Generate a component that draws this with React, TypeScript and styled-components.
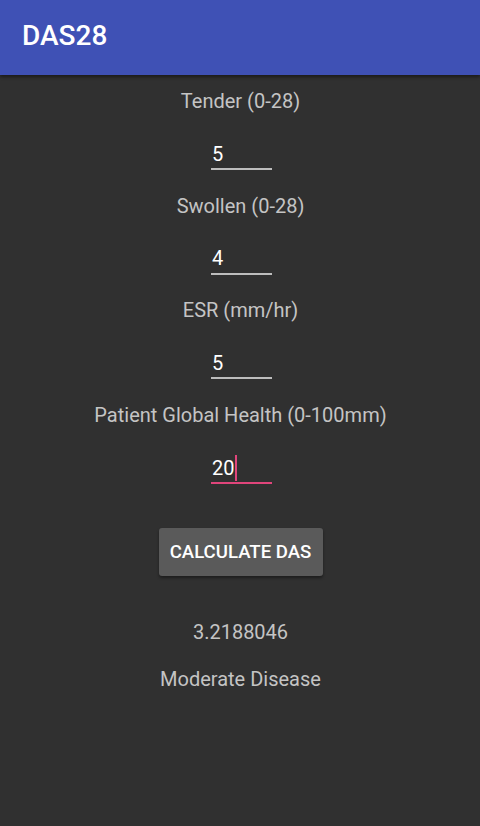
import styled, { createGlobalStyle } from 'styled-components';

const GlobalStyle = createGlobalStyle`
  html, body {
    margin: 0;
    padding: 0;
    background: #303030;
    font-family: Roboto, 'Noto Sans', sans-serif;
  }
  * {
    box-sizing: border-box;
  }
`;

const fields = [
  { label: 'Tender (0-28)', value: '5' },
  { label: 'Swollen (0-28)', value: '4' },
  { label: 'ESR (mm/hr)', value: '5' },
  { label: 'Patient Global Health (0-100mm)', value: '20', focused: true },
];

export default function App() {
  return (
    <Screen>
      <GlobalStyle />
      <Toolbar>
        <Title>DAS28</Title>
      </Toolbar>
      <Content>
        {fields.map(field => (
          <Field key={field.label}>
            <Label>{field.label}</Label>
            <Input $focused={field.focused}>
              {field.value}
              {field.focused ? <Cursor /> : null}
            </Input>
          </Field>
        ))}
        <Button>CALCULATE DAS</Button>
        <Result>3.2188046</Result>
        <Verdict>Moderate Disease</Verdict>
      </Content>
    </Screen>
  );
}

const Screen = styled.div`
  width: 480px;
  min-height: 826px;
  background: #303030;
  display: flex;
  flex-direction: column;
`;

const Toolbar = styled.div`
  height: 75px;
  background: #3f51b5;
  display: flex;
  align-items: center;
  padding-left: 22px;
  box-shadow: 0 2px 3px rgba(0, 0, 0, 0.45);
  position: relative;
  z-index: 1;
`;

const Title = styled.div`
  color: #ffffff;
  font-size: 28px;
  font-weight: 500;
  margin-top: -4px;
`;

const Content = styled.div`
  display: flex;
  flex-direction: column;
  align-items: center;
  padding-top: 12px;
  padding-left: 1px;
`;

const Field = styled.div`
  display: flex;
  flex-direction: column;
  align-items: center;
  margin-bottom: 21.7px;
`;

const Label = styled.div`
  color: #c4c4c4;
  font-size: 20px;
  line-height: 28px;
  margin-bottom: 24px;
`;

const Input = styled.div<{ $focused?: boolean }>`
  width: 61px;
  height: 31px;
  margin-left: 2px;
  color: #ffffff;
  font-size: 20px;
  line-height: 28px;
  padding-left: 1px;
  border-bottom: 2px solid ${props => (props.$focused ? '#e0457b' : '#bdbdbd')};
  display: flex;
  align-items: center;
`;

const Cursor = styled.span`
  display: inline-block;
  width: 2px;
  height: 26px;
  margin-left: 1px;
  background: #e0457b;
`;

const Button = styled.div`
  margin-top: 22px;
  width: 164px;
  height: 48px;
  background: #5a5a5a;
  border-radius: 3px;
  box-shadow: 0 2px 3px rgba(0, 0, 0, 0.4);
  color: #ffffff;
  font-size: 18.6px;
  font-weight: 500;
  display: flex;
  align-items: center;
  justify-content: center;
`;

const Result = styled.div`
  margin-top: 42px;
  color: #c4c4c4;
  font-size: 20px;
  line-height: 28px;
`;

const Verdict = styled.div`
  margin-top: 19px;
  color: #c4c4c4;
  font-size: 20px;
  line-height: 28px;
`;
